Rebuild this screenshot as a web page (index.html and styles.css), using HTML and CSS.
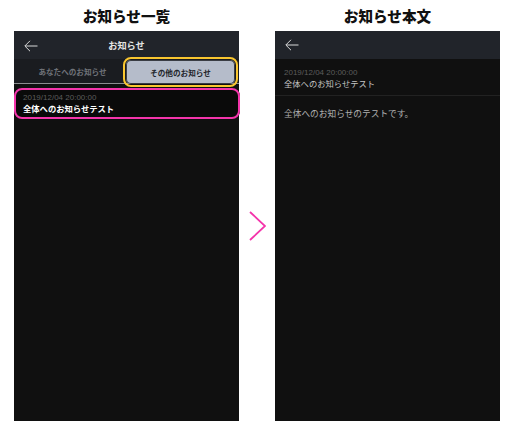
FILE: index.html
```html
<!DOCTYPE html>
<html lang="ja">
<head>
<meta charset="utf-8">
<title>お知らせ</title>
<link rel="stylesheet" href="styles.css">
</head>
<body>
<main class="page">
  <section class="col">
    <h2 class="col-title">お知らせ一覧</h2>
    <div class="phone">
      <header class="bar">
        <svg class="back back-list" viewBox="0 0 14 12" width="14" height="12"><path d="M13.5 6H1M6 .8 .8 6 6 11.2" fill="none" stroke="#d8d8d8" stroke-width="1"/></svg>
        <span class="bar-title">お知らせ</span>
      </header>
      <nav class="tabs">
        <div class="tab">あなたへのお知らせ</div>
        <div class="tab tab-on">その他のお知らせ<span class="ring ring-yellow"></span></div>
      </nav>
      <article class="item">
        <div class="date">2019/12/04 20:00:00</div>
        <div class="subject subject-bold">全体へのお知らせテスト</div>
        <span class="ring ring-pink"></span>
      </article>
    </div>
  </section>
  <div class="arrow">
    <svg viewBox="0 0 18 30" width="18" height="30"><path d="M2 1 17 15 2 29" fill="none" stroke="#f435ab" stroke-width="1.8"/></svg>
  </div>
  <section class="col">
    <h2 class="col-title">お知らせ本文</h2>
    <div class="phone">
      <header class="bar bar-plain">
        <svg class="back" viewBox="0 0 14 12" width="14" height="12"><path d="M13.5 6H1M6 .8 .8 6 6 11.2" fill="none" stroke="#d8d8d8" stroke-width="1"/></svg>
      </header>
      <div class="head">
        <div class="date">2019/12/04 20:00:00</div>
        <div class="subject">全体へのお知らせテスト</div>
      </div>
      <p class="body-text">全体へのお知らせのテストです。</p>
    </div>
  </section>
</main>
</body>
</html>
```
FILE: styles.css
```css
* { box-sizing: border-box; }
html, body { margin: 0; height: 100%; background: #fff; }
body { font-family: "Noto Sans CJK JP", "Liberation Sans", sans-serif; overflow: hidden; }
.page { display: flex; padding-left: 14px; width: 513px; height: 426px; }
.col { width: 225px; display: flex; flex-direction: column; }
.col-title { margin: 0; height: 31px; padding-top: 6px; font-size: 14.6px; line-height: 20px; font-weight: 900; text-align: center; color: #111; }
.phone { width: 225px; height: 390px; background: #101010; }
.arrow { width: 36px; height: 390px; margin-top: 31px; display: flex; align-items: center; justify-content: center; }
.bar { height: 28px; background: #21242a; position: relative; display: flex; align-items: center; justify-content: center; }
.bar-plain { justify-content: flex-start; }
.back { position: absolute; left: 10px; top: 8px; }
.back-list { top: 9px; }
.bar-title { font-size: 9.2px; font-weight: 700; color: #e6e6e6; }
.tabs { display: flex; height: 25px; background: #1a1c20; border-bottom: 1px solid #8b8d90; }
.tab { width: 112px; padding-left: 5px; display: flex; align-items: center; justify-content: center; font-size: 7.6px; font-weight: 700; color: #6f7278; position: relative; }
.tab-on { width: 109px; height: 24px; padding-left: 0; margin-top: 1px; background: #b5bcca; color: #22252b; border-radius: 5px; box-shadow: inset 0 0 0 1px #3a3d44; }
.ring { position: absolute; pointer-events: none; }
.ring-yellow { left: -3px; right: -3px; top: -3px; bottom: -3px; border: 2.5px solid #f9c62f; border-radius: 8px; }
.item { position: relative; width: 226px; height: 31px; margin-top: 4px; padding: 4px 9px; background: #0a0a0a; border-radius: 8px; }
.ring-pink { left: 0; right: 0; top: 0; bottom: 0; border: 2.5px solid #f435ab; border-radius: 8px; }
.date { font-family: "Liberation Sans", sans-serif; font-size: 8px; line-height: 11px; color: #5c5c5c; }
.subject { font-size: 8.3px; line-height: 12px; margin-top: -1px; color: #c4c4c4; }
.subject-bold { font-weight: 700; color: #ffffff; }
.head { height: 37px; padding: 8px 9px 0; border-bottom: 1px solid #222; }
.body-text { margin: 0; padding: 11px 9px; font-size: 8.7px; line-height: 14px; color: #b0b0b0; }
```
